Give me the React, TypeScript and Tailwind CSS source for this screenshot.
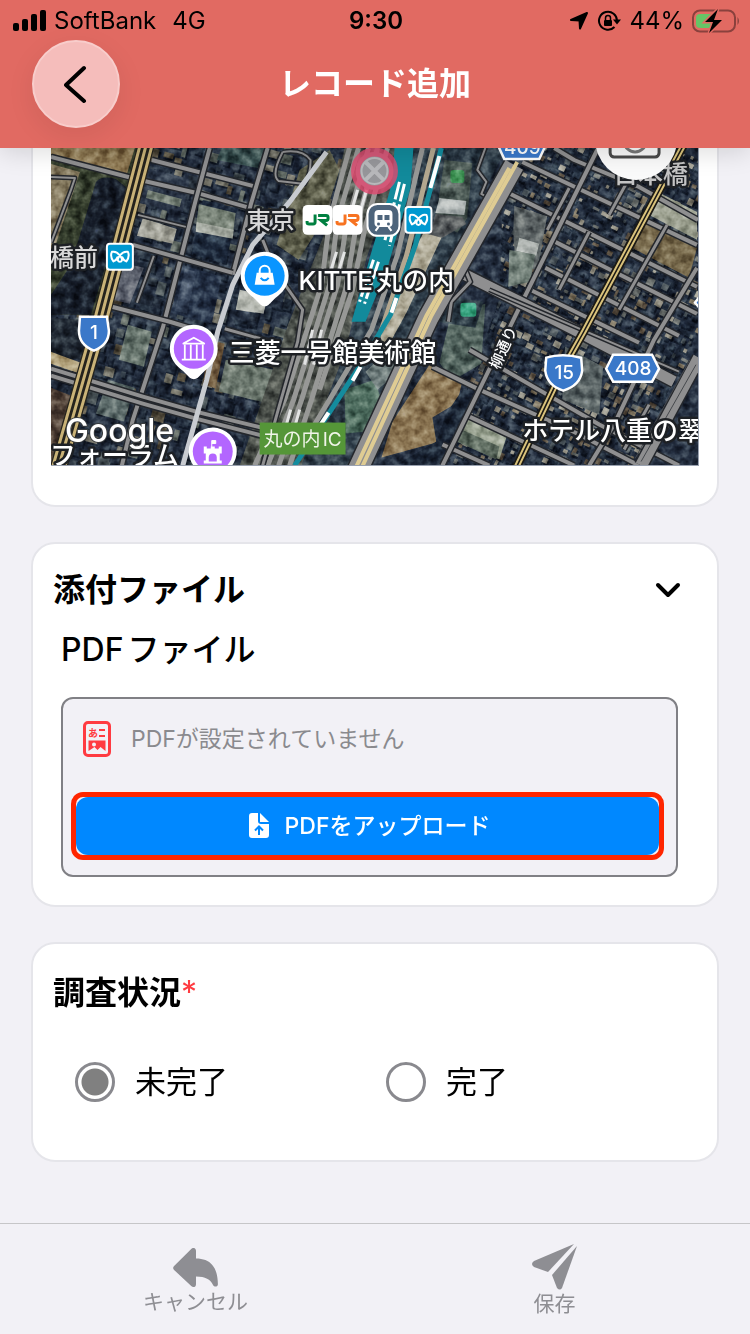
import type { ReactNode } from 'react'

type Building = {
  x: number
  y: number
  w: number
  h: number
  fill: string
}

type RoadProps = {
  d: string
  width?: number
  color?: string
}

const seeded = (seed: number) => {
  let s = seed
  return () => {
    s = (s * 16807) % 2147483647
    return s / 2147483647
  }
}

const downtown = ['#1f293d', '#1b2438', '#252f42', '#323d4d', '#48525b', '#5d6665', '#706f69', '#293548', '#1e283c', '#544d42']
const smallTown = ['#1c2639', '#212c42', '#2a374c', '#62676a', '#8b8880', '#7c7263', '#48525d', '#1d273b', '#9c9a92', '#263146', '#5d5248']

const makeBuildings = (seed: number, cols: number, rows: number, size: number, colors: string[]) => {
  const rnd = seeded(seed)
  const list: Building[] = []
  for (let r = 0; r < rows; r++) {
    for (let c = 0; c < cols; c++) {
      list.push({
        x: c * size + rnd() * size * 0.4,
        y: r * size + rnd() * size * 0.4,
        w: size * (0.3 + rnd() * 0.7),
        h: size * (0.3 + rnd() * 0.7),
        fill: colors[Math.floor(rnd() * colors.length)],
      })
    }
  }
  return list
}

const leftBuildings = makeBuildings(77, 26, 29, 14, downtown)
const rightBuildings = makeBuildings(4242, 46, 48, 8, smallTown)

const Buildings = ({ items }: { items: Building[] }) => (
  <>
    {items.map((b, i) => (
      <g key={i}>
        <rect x={b.x + 2} y={b.y + 2} width={b.w} height={b.h} fill="#121a2b" />
        <rect x={b.x} y={b.y} width={b.w} height={b.h} fill={b.fill} />
      </g>
    ))}
  </>
)

const Road = ({ d, width = 4, color = '#8f8f90' }: RoadProps) => (
  <g fill="none" strokeLinejoin="round">
    <path d={d} stroke="#24272c" strokeWidth={width + 3} />
    <path d={d} stroke={color} strokeWidth={width} />
  </g>
)

const MapText = ({ x, y, size = 26, fill = '#fff', children }: { x: number; y: number; size?: number; fill?: string; children: ReactNode }) => (
  <text x={x} y={y} fontSize={size} fontWeight="500" fill={fill} stroke="#1d2024" strokeWidth="5" strokeLinejoin="round" paintOrder="stroke">
    {children}
  </text>
)

const Pin = ({ x, y, color, children }: { x: number; y: number; color: string; children: ReactNode }) => (
  <g transform={`translate(${x} ${y})`}>
    <path d="M0-24a24 24 0 0 1 24 24c0 10-6 17-13 22L4 29q-4 3-8 0l-7-7C-18 17-24 10-24 0A24 24 0 0 1 0-24z" fill="#fff" />
    <circle r="20" fill={color} />
    {children}
  </g>
)

const Metro = ({ x, y }: { x: number; y: number }) => (
  <g transform={`translate(${x} ${y})`}>
    <rect x="-13" y="-13" width="26" height="26" rx="3" fill="#0099d0" stroke="#fff" strokeWidth="2" />
    <path
      d="M-6.500 4.500C-9 1-9-3-8-5c4-1 7 2 9 5 2 3 1 5-1 5s-3-2-1-5c2-3 5-6 9-5 1 2 1 6-1.500 9.500M-6.500 4.500q3-1 4-4M6.500 4.500q-3-1-4-4"
      fill="none"
      stroke="#fff"
      strokeWidth="2"
      strokeLinecap="round"
      strokeLinejoin="round"
    />
  </g>
)

const JrMark = ({ x, color }: { x: number; color: string }) => (
  <g transform={`translate(${x} 205)`}>
    <rect width="30" height="30" rx="5" fill="#fff" />
    <path d="M4.500 16v1.500q0 1.500 2 1.500h4q2 0 2-2V9.500M15.500 10.500h8q2 0 2 2v1q0 2-2 2h-5l6 5" fill="none" stroke={color} strokeWidth="3" />
  </g>
)

const SatelliteMap = () => (
  <svg
    viewBox="51 148 648 318"
    preserveAspectRatio="xMidYMin slice"
    className="block h-[318px] w-full border-r border-b border-gray-400 font-['Inter','Noto_Sans_CJK_JP',sans-serif] [text-autospace:normal]"
    role="img"
    aria-label="地図"
  >
    <defs>
      <filter id="grain" x="0" y="0" width="100%" height="100%" colorInterpolationFilters="sRGB">
        <feTurbulence type="fractalNoise" baseFrequency="0.11" numOctaves="3" seed="5" />
        <feColorMatrix values="1.6 0 0 0 -0.3  1.6 0 0 0 -0.3  1.5 0 0 0 -0.3  0 0 0 0 1" />
      </filter>
      <clipPath id="west">
        <path d="M51 148H346L262 466H51z" />
      </clipPath>
      <clipPath id="east">
        <path d="M505 148H699V466H440L500 300z" />
      </clipPath>
    </defs>
    <rect x="51" y="148" width="648" height="318" fill="#263147" />

    <g clipPath="url(#west)">
      <g transform="translate(100 60) rotate(15)">
        <Buildings items={leftBuildings} />
      </g>
    </g>
    <g clipPath="url(#east)">
      <g transform="translate(520 70) rotate(26)">
        <g transform="translate(-90 0)">
          <Buildings items={rightBuildings} />
        </g>
      </g>
    </g>

    {/* moat and gardens */}
    <path d="M51 148h94l-42 167H51z" fill="#353e31" />
    <path d="M51 148h84l-8 26-76-20z" fill="#8d7857" />
    <path d="M51 164l29 8-24 72-5 12z" fill="#887d67" />
    <path d="M96 182q6-7 20-3l10 8-2 18-33 110H51v-20l20-30z" fill="#171e2e" />
    <path d="M51 318l48 3-9 40-39-4z" fill="#202837" />
    <path d="M51 352l38 14-3 10-35-12z" fill="#b1a17f" />
    <path d="M51 388l30 12-20 66H51z" fill="#4b3c37" />

    {/* larger roofs */}
    <path d="M148 168l42 11-7 33-44-9z" fill="#2b364c" />
    <path d="M148 190l34 9-2 8-34-9z" fill="#77827d" />
    <path d="M143 218l34 11-4 15-36-8z" fill="#a6a6a0" />
    <path d="M203 200l35 8-12 56-34-9z" fill="#1d2940" />
    <path d="M199 204l37 9-3 23-37-7z" fill="#77827b" />
    <path d="M197 222l37 8-1 9-37-7z" fill="#a9aea9" />
    <path d="M222 148h43l-7 20-41-8z" fill="#3c5459" />
    <path d="M236 310l28 4 4-18-28-6z" fill="#b8bbb7" />
    <path d="M182 265l40 12-10 47-41-11z" fill="#27344e" />
    <path d="M185 269l12 3-10 42-12-3z" fill="#3a4862" />
    <path d="M128 325l24 7-8 35-25-7z" fill="#6a7875" />
    <path d="M118 262l26 6-14 36-22-5z" fill="#5c6172" />
    <path d="M210 340l15 4-9 45-13-5z" fill="#66503a" />
    <path d="M226 360l48 10-9 33-46-11z" fill="#6e7a75" />
    <path d="M108 380l27 8-11 34-28-8z" fill="#5c6b6f" />

    {/* rail yard */}
    <path d="M345 148h62l-40 110-20 90-45 118h-62l48-140 40-100z" fill="#4c5150" />
    <path d="M300 170l30-20 10 20-16 50-25 40-22-15z" fill="#5e5f50" />
    <path d="M407 148h100l-85 166-60 152h-60l46-118 22-90z" fill="#303f50" />
    <path d="M445 160l28 3-5 55-10 15-22-12z" fill="#4e5c5c" />
    <path d="M440 198l27 3-2 14-29-2z" fill="#b4babc" />
    <path d="M436 214l27 3 4 7-24 14-14 4z" fill="#565a61" />
    <rect x="451" y="170" width="14" height="13" rx="3" fill="#3c9057" />
    <path d="M424 233l18 5-35 75-22 40-5-20 15-42z" fill="#b3ae9f" />
    <path d="M452 312l34-8-4 60-29 17-13-18z" fill="#526463" />
    <path d="M446 296l38 6-8 26-38-6z" fill="#2c3b4a" />
    <rect x="461" y="303" width="16" height="14" rx="3" fill="#3aa687" />
    <path d="M345 390l30-10 8 24-17 28-20 2z" fill="#4c6b62" />
    <path d="M389 350l30-18-3 26-38 32-12-18z" fill="#6c7a7e" />
    <path d="M430 365l33 16-5 22-25 15 4 25-55 15 11-36z" fill="#8c7658" />
    <path d="M463 390l13 2-32 72h-45l38-22 10-28z" fill="#1a2438" />
    <path d="M465 418l43 17-8 25-43-19z" fill="#98a194" />
    <path d="M462 430l38 17-3 13-40-18z" fill="#5f6d66" />
    <path d="M566 347l38 20-4 48-37-15z" fill="#5b656b" />
    <path d="M515 206l33 10-10 55-22-9-2-30z" fill="#5f666c" />
    <path d="M520 238l20 6-3 12-20-5z" fill="#b3b8b8" />
    <path d="M510 250l26 5-5 27-22 5z" fill="#74827f" />
    <path d="M655 190l43 22v28l-46-24z" fill="#9ea296" />
    <path d="M640 220l58 28-8 30-57-30z" fill="#76684f" />

    <rect x="51" y="148" width="648" height="318" filter="url(#grain)" className="mix-blend-soft-light" opacity="0.8" />

    <g fill="none" stroke="#979896" strokeWidth="5">
      <path d="M350 148L330 220 322 285 285 400 255 466" />
      <path d="M359 148L338 220 330 285 294 400 268 466" />
      <path d="M369 148L346 230 338 285 302 400 279 466" />
      <path d="M378 148L356 230 346 290 312 400 290 466" />
      <path d="M388 148L365 230 353 290 320 390" />
      <path d="M423 148L398 255 372 330 312 430" />
      <path d="M434 148L407 256 382 330" stroke="#b3a78f" />
    </g>
    <g fill="none" stroke="#e3e4e4" strokeWidth="3">
      <path d="M367 190l-8 28M358 190l-8 28M345 252l-7 23M337 252l-7 23M322 330l-8 35M313 330l-8 35M300 410l-7 25M291 410l-7 25" />
    </g>
    <path d="M395 148h19l-3 40-23 80-22 54h-14l20-70 21-70z" fill="#128a9b" />
    <path d="M400 182l-15 60M405 184l-15 62M374 260l-14 42M379 262l-14 42" stroke="#fff" strokeWidth="3" strokeDasharray="18 3" />
    <path d="M442 148L416 245 391 315 360 367 295 466" fill="none" stroke="#148c9e" strokeWidth="5" />
    <path d="M440 156l-9 32M397 298l-5 15M361 367l-8 14M329 413l-8 12" stroke="#fff" strokeWidth="4" />

    <Road d="M51 157L140 180 197 193 250 208" />
    <Road d="M152 160L257 187" />
    <Road d="M210 148L196 200 163 328 133 420 122 466" />
    <Road d="M268 148L251 205 233 275" />
    <Road d="M133 245L233 273" />
    <Road d="M112 307L170 322 190 328" />
    <Road d="M138 215L186 227" width={2} />
    <Road d="M154 256L137 303" width={2} />
    <Road d="M51 177L75 178 71 190 51 243" width={2} />
    <Road d="M283 152q20-3 28 8 0 14-6 24l-26-3q-8-6 4-29" width={2} />
    <Road d="M51 369L143 397 200 413 270 430" width={4} />
    <Road d="M51 376L143 404 200 420 270 438" width={4} />
    <Road d="M225 329L275 343M263 240l12 30 28 40-5 32-20 70-15 54" width={3} />
    <path d="M327 152L290 202 253 245 233 285 218 332 207 380 183 466" fill="none" stroke="#c8cbd0" strokeWidth="5" />

    {/* east grid */}
    <Road d="M523 162L698 245" />
    <Road d="M507 192L698 287" />
    <Road d="M556 242L698 314" />
    <Road d="M546 268L680 336" />
    <Road d="M533 291L640 343" />
    <Road d="M470 350L600 425 680 466" />
    <Road d="M433 367L480 390 570 430 640 466" />
    <Road d="M470 417L575 466" />
    <Road d="M443 445L490 466" />
    <Road d="M555 148L575 160 640 187 699 220" />
    <Road d="M598 150L520 308 443 466" />
    <Road d="M698 268L655 340 615 425 590 466" />
    <Road d="M570 188L548 230M640 160L610 215M590 232L560 290M668 225L620 310M650 405L625 450" width={3} />
    <Road d="M466 275L520 302 575 330 675 382" width={11} />
    <Road d="M490 290L680 372" width={2} />
    <Road d="M486 148l-8 22 9 12-5 12 9 5-12 25" width={2} />
    <Road d="M485 205L466 270 471 282 452 302 449 322" width={3} />
    <Road d="M700 358L642 466" width={12} />
    <path d="M697 365L642 462M691 360L636 459" stroke="#45484c" fill="none" />

    <Road d="M515 165L429 318 349 490" width={20} />
    <path d="M518 162L432 316 355 484M510 168L427 316 349 484" fill="none" stroke="#dfcc93" strokeWidth="4" />
    <path d="M146 146L102 315 73 417 58 470" fill="none" stroke="#25231d" strokeWidth="17" />
    <path d="M140 146L96 315 67 417 52 470M146 146L102 315 73 417 58 470M152 146L108 315 79 417 64 470" fill="none" stroke="#c9b277" strokeWidth="3" />
    <path d="M684 146L584 333 566 365 517 468" fill="none" stroke="#1c1a15" strokeWidth="9" />
    <path d="M682 146L582 333 564 365 515 468M686 146L586 333 568 365 519 468" fill="none" stroke="#d9c27b" strokeWidth="2" />

    <circle cx="375" cy="171" r="19" fill="#96969a" stroke="#e2496f" strokeOpacity="0.8" strokeWidth="9" />
    <path d="M366 162l18 18M366 180l18-18" stroke="#b8b8bb" strokeWidth="4" />
    <circle cx="375" cy="171" r="13" fill="none" stroke="#b8b8bb" strokeWidth="2" />

    {/* road numbers */}
    <g fill="#3a78c9" stroke="#fff" strokeWidth="2.500" fontFamily="Inter, sans-serif">
      <path d="M498 144h49l-7 15h-35z" />
      <path d="M80 317h27l2 14q0 14-15 20-15-6-15-20z" />
      <path d="M547 358q16-5 35 0l1 13q-2 15-19 20-16-5-18-20z" />
      <path d="M614 355h39l7 14-7 13h-39l-7-13z" />
      <path d="M704 292l-8 11 8 9z" />
    </g>
    <g fill="#fff" fontSize="19" fontWeight="500" textAnchor="middle">
      <text x="523" y="154">409</text>
      <text x="94" y="339">1</text>
      <text x="565" y="379">15</text>
      <text x="634" y="375">408</text>
    </g>

    <MapText x={247} y={229} size={24} fill="#d9d9d9">東京</MapText>
    <MapText x={50} y={266} size={24} fill="#d9d9d9">橋前</MapText>
    <MapText x={614} y={183} size={25} fill="#c4c4c4">日本橋</MapText>
    <MapText x={299} y={290}>KITTE丸の内</MapText>
    <MapText x={229} y={362}>三菱一号館美術館</MapText>
    <MapText x={523} y={440}>ホテル八重の翠</MapText>
    <MapText x={50} y={466}>フォーラム</MapText>
    <g transform="translate(496 369) rotate(-66)">
      <MapText x={0} y={4} size={15}>柳通り</MapText>
    </g>

    <JrMark x={303} color="#008040" />
    <JrMark x={333} color="#f77321" />
    <g transform="translate(384 220)">
      <rect x="-16" y="-16" width="32" height="32" rx="10" fill="#4d647b" stroke="#fff" strokeWidth="2" />
      <rect x="-9" y="-10" width="18" height="17" rx="4" fill="#fff" />
      <path d="M-6-5h5v5h-5zM1-5h5v5H1z" fill="#4d647b" />
      <circle cx="-5" cy="4" r="1.500" fill="#4d647b" />
      <circle cx="5" cy="4" r="1.500" fill="#4d647b" />
      <path d="M-5 7l-3 4M5 7l3 4" stroke="#fff" strokeWidth="2" />
    </g>
    <Metro x={419} y={220} />
    <Metro x={120} y={257} />

    <Pin x={265} y={276} color="#0a95ff">
      <path d="M-8-3H8l2 12H-10z" fill="#fff" />
      <path d="M-5-2v-3a5 5 0 0 1 10 0v3" fill="none" stroke="#fff" strokeWidth="2" />
      <path d="M-4 2q4 5 8 0" fill="none" stroke="#0a95ff" strokeWidth="2" />
    </Pin>
    <Pin x={194} y={349} color="#b366ff">
      <path d="M-11-5L0-11 11-5zM-9-4V10M-3-4V10M3-4V10M9-4V10M-12 11h24M-11-5h22" fill="none" stroke="#fff" strokeWidth="1.800" />
    </Pin>
    <Pin x={213} y={452} color="#b366ff">
      <path d="M-9-5h3v2h4v-2h4v2h4v-2h3v7H7v7h2v3H-9V9h2V2h-2z" fill="#fff" />
      <path d="M-1-4v-7h4v3h-4" stroke="#fff" fill="#fff" />
      <path d="M-4 10V6a4 4 0 0 1 8 0v4z" fill="#b366ff" />
    </Pin>

    <rect x="260" y="423" width="86" height="32" fill="#559638" />
    <text x="303" y="446" fontSize="19" fill="#f0f5e9" textAnchor="middle">丸の内IC</text>
    <text x="65" y="442" fontSize="32" fontWeight="500" fill="#fff" stroke="#383b3d" strokeWidth="2" paintOrder="stroke">
      Google
    </text>

    {/* camera control over the map */}
    <circle cx="637" cy="139" r="41" fill="#fafafa" />
    <rect x="611" y="126" width="49" height="31" rx="4" fill="none" stroke="#4a4a4a" strokeWidth="3" />
    <circle cx="636" cy="141" r="11" fill="none" stroke="#777" strokeWidth="3" />
  </svg>
)

const StatusBar = () => (
  <div className="grid h-10 grid-cols-3 items-center pt-px pr-2.5 pl-3 text-2xl text-black">
    <div className="flex items-center gap-2">
      <svg viewBox="0 0 34 22" className="h-[22px] w-[34px]">
        <rect x="1" y="13" width="6" height="8" rx="2" />
        <rect x="10" y="9" width="6" height="12" rx="2" />
        <rect x="19" y="4" width="6" height="17" rx="2" />
        <rect x="28" y="0" width="6" height="21" rx="2" />
      </svg>
      <span>SoftBank</span>
      <span className="ml-2">4G</span>
    </div>
    <span className="text-center font-semibold">9:30</span>
    <div className="flex items-center justify-end gap-2">
      <svg viewBox="0 0 20 20" className="size-5">
        <path d="M18 2L11 17.500l-.500-8L2 9z" stroke="#000" strokeWidth="2" strokeLinejoin="round" />
      </svg>
      <svg viewBox="0 0 24 24" className="size-6">
        <path d="M17.500 18a9 9 0 1 1 2.500-6" fill="none" stroke="#000" strokeWidth="2" />
        <path d="M16 10.500h8l-4 5z" />
        <rect x="7" y="11" width="8" height="6" rx="1" />
        <path d="M8.500 11V9a2.500 2.500 0 0 1 5 0v2" fill="none" stroke="#000" strokeWidth="1.500" />
      </svg>
      <span>44%</span>
      <svg viewBox="0 0 48 24" className="h-6 w-12">
        <rect x="1" y="1.500" width="42" height="21" rx="7" fill="none" stroke="#8a413d" strokeWidth="2" />
        <path d="M45.500 8q3 4 0 8z" fill="#8a413d" />
        <path d="M8 5h11v14H8q-4 0-4-4V9q0-4 4-4z" fill="#66c466" />
        <path d="M26 0L13 13h8l-4 11 13-13h-8z" stroke="#e16a62" strokeWidth="3" paintOrder="stroke" />
      </svg>
    </div>
  </div>
)

const Header = () => (
  <header className="relative z-10 h-[148px] bg-[#e16a62] shadow-[0_4px_24px_rgba(0,0,0,0.14)]">
    <StatusBar />
    <div className="grid grid-cols-[88px_1fr_88px] items-center px-8">
      <button
        type="button"
        aria-label="戻る"
        className="flex size-22 items-center justify-center rounded-full border-2 border-[#f8cdcb] bg-[#f5bdbb] shadow-[0_8px_28px_rgba(0,0,0,0.08)]"
      >
        <svg viewBox="0 0 24 40" className="h-10 w-6" fill="none" stroke="#000" strokeWidth="4" strokeLinecap="round" strokeLinejoin="round">
          <path d="M20 4L2 21l18 16" />
        </svg>
      </button>
      <h1 className="text-center text-[32px] font-bold text-white">レコード追加</h1>
    </div>
  </header>
)

const PdfIcon = () => (
  <svg viewBox="0 0 28 36" className="h-9 w-7 shrink-0" fill="none" stroke="#ff3b41" strokeWidth="3">
    <rect x="1.500" y="1.500" width="25" height="33" rx="3.500" />
    <text x="5" y="16" fontSize="10" fontWeight="700" fill="#ff3b41" stroke="none">あ</text>
    <path d="M16 9h6M16 15h6" strokeWidth="2" />
    <path d="M5.500 19.500h17V30l-5-4-3 3-3-3-6 4z" fill="#ff3b41" stroke="none" />
    <circle cx="11" cy="23.500" r="2" fill="#f2f1f6" stroke="none" />
  </svg>
)

const UploadIcon = () => (
  <svg viewBox="0 0 20 26" className="h-[26px] w-5">
    <path d="M3 0h6v8q0 3 3 3h8v11q0 3-3 3H3q-3 0-3-3V3q0-3 3-3z" fill="#fff" />
    <path d="M11 0l9 9h-9z" fill="#fff" />
    <path d="M10 22v-8M6 17.500l4-4 4 4" fill="none" stroke="#0088ff" strokeWidth="2" />
  </svg>
)

const StatusOption = ({ label, checked }: { label: string; checked?: boolean }) => (
  <label className="flex items-center gap-5 text-[31px]">
    <input
      type="radio"
      name="status"
      defaultChecked={checked}
      className="size-10 shrink-0 appearance-none rounded-full border-3 border-[#89898e] checked:bg-[radial-gradient(circle,#808080_13px,#fff_14px)]"
    />
    {label}
  </label>
)

const TabButton = ({ label, children }: { label: string; children: ReactNode }) => (
  <button type="button" className="flex flex-col items-center text-[21px] leading-7 text-[#8e8e93]">
    {children}
    {label}
  </button>
)

const App = () => (
  <div className="flex min-h-screen flex-col bg-[#f2f1f6] font-['Inter','Noto_Sans_CJK_JP',sans-serif] text-black">
    <Header />
    <main className="flex flex-1 flex-col gap-[35px] px-[31px]">
      <section className="rounded-b-3xl border-2 border-t-0 border-[#e5e5ea] bg-white px-[18px] pb-[39px]">
        <SatelliteMap />
      </section>

      <section className="rounded-3xl border-2 border-[#e5e5ea] bg-white px-5 pt-[22px] pb-7">
        <div className="flex items-center justify-between pr-4">
          <h2 className="text-[32px] leading-12 font-bold">添付ファイル</h2>
          <button type="button" aria-label="折りたたむ">
            <svg viewBox="0 0 26 16" className="h-4 w-[26px]" fill="none" stroke="#000" strokeWidth="4" strokeLinecap="round" strokeLinejoin="round">
              <path d="M3 3l10 10L23 3" />
            </svg>
          </button>
        </div>
        <h3 className="mt-3 ml-2 text-[32px] leading-12 font-medium [text-autospace:normal]">PDFファイル</h3>
        <div className="mt-[23px] mr-[19px] ml-2 rounded-xl border-2 border-[#808085] bg-[#f2f1f6] px-2 pt-5 pb-[15px]">
          <p className="flex items-center gap-5 px-3 text-[23px] leading-10 text-[#8a8a8e]">
            <PdfIcon />
            PDFが設定されていません
          </p>
          <div className="mt-[33px] mr-1 rounded-xl border-[5px] border-[#ff2600]">
            <button type="button" className="flex h-[58px] w-full items-center justify-center gap-4 rounded-xl bg-[#0088ff] pl-1 text-[23px] font-medium text-white">
              <UploadIcon />
              PDFをアップロード
            </button>
          </div>
        </div>
      </section>

      <section className="rounded-3xl border-2 border-[#e5e5ea] bg-white px-5 pt-[25px] pb-[54px]">
        <fieldset>
          <legend className="text-[32px] leading-12 font-bold">
            調査状況<span className="font-normal text-[#ff3b41]">*</span>
          </legend>
          <div className="mt-[42px] grid grid-cols-2 pl-[22px]">
            <StatusOption label="未完了" checked />
            <StatusOption label="完了" />
          </div>
        </fieldset>
      </section>
    </main>

    <footer className="grid h-[111px] grid-cols-2 items-start justify-items-center border-t border-[#c6c6c8] px-4 pt-5">
      <TabButton label="キャンセル">
        <svg viewBox="0 0 48 42" className="mt-1 h-10 w-12" fill="#8e8e93">
          <path d="M24 3v8c15 0 23 9 23 27 0 3-4 3-5 1-3-6-8-9-18-9v8c0 3-3 4-5 2L1 23q-2-2 0-4L19 1c2-2 5-1 5 2z" />
        </svg>
      </TabButton>
      <TabButton label="保存">
        <svg viewBox="0 0 46 46" className="h-[46px] w-[46px]" fill="#8e8e93">
          <path d="M42 0L2 17q-4 3 0 6l14 5z" />
          <path d="M45 2L20 31l5 13q3 3 5 0z" />
        </svg>
      </TabButton>
    </footer>
  </div>
)

export default App
